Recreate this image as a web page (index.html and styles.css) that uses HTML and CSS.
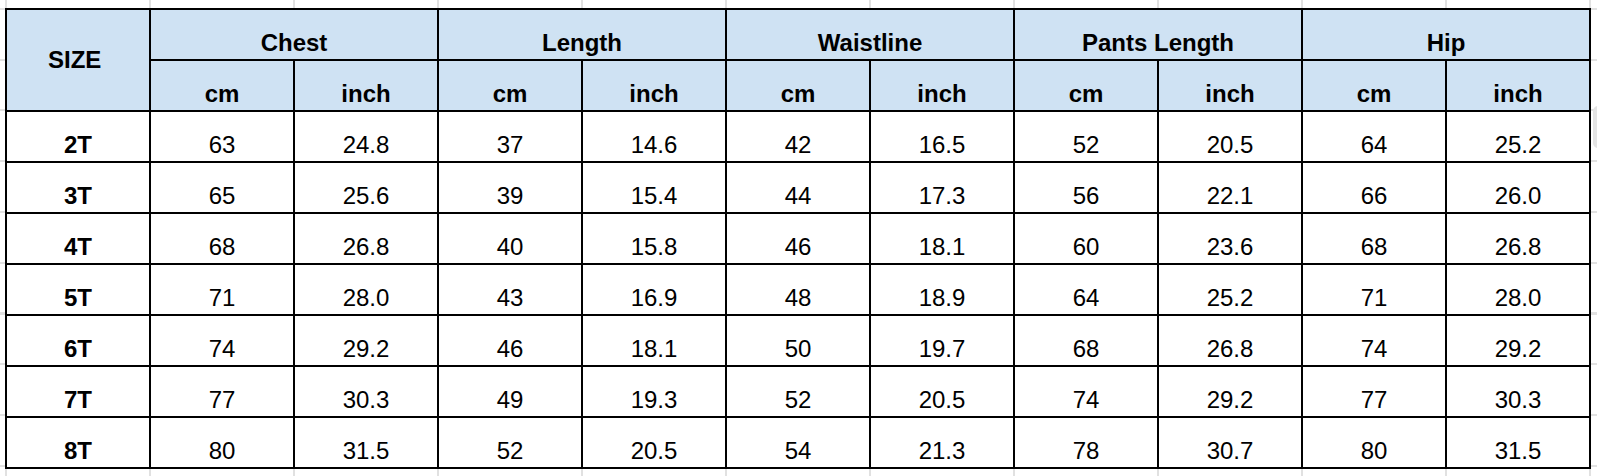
FILE: index.html
```html
<!DOCTYPE html>
<html lang="en">
<head>
<meta charset="utf-8">
<title>Size chart</title>
<link rel="stylesheet" href="styles.css">
</head>
<body>
<div class="sheet">
  <table class="size-table">
    <colgroup>
      <col><col><col><col><col><col><col><col><col><col><col>
    </colgroup>
    <thead>
      <tr class="row-h1">
        <th class="size-head" rowspan="2">SIZE&nbsp;</th>
        <th colspan="2">Chest</th>
        <th colspan="2">Length</th>
        <th colspan="2">Waistline</th>
        <th colspan="2">Pants Length</th>
        <th colspan="2">Hip</th>
      </tr>
      <tr class="row-h2">
        <th>cm</th><th>inch</th>
        <th>cm</th><th>inch</th>
        <th>cm</th><th>inch</th>
        <th>cm</th><th>inch</th>
        <th>cm</th><th>inch</th>
      </tr>
    </thead>
    <tbody>
      <tr><th>2T</th><td>63</td><td>24.8</td><td>37</td><td>14.6</td><td>42</td><td>16.5</td><td>52</td><td>20.5</td><td>64</td><td>25.2</td></tr>
      <tr><th>3T</th><td>65</td><td>25.6</td><td>39</td><td>15.4</td><td>44</td><td>17.3</td><td>56</td><td>22.1</td><td>66</td><td>26.0</td></tr>
      <tr><th>4T</th><td>68</td><td>26.8</td><td>40</td><td>15.8</td><td>46</td><td>18.1</td><td>60</td><td>23.6</td><td>68</td><td>26.8</td></tr>
      <tr><th>5T</th><td>71</td><td>28.0</td><td>43</td><td>16.9</td><td>48</td><td>18.9</td><td>64</td><td>25.2</td><td>71</td><td>28.0</td></tr>
      <tr><th>6T</th><td>74</td><td>29.2</td><td>46</td><td>18.1</td><td>50</td><td>19.7</td><td>68</td><td>26.8</td><td>74</td><td>29.2</td></tr>
      <tr><th>7T</th><td>77</td><td>30.3</td><td>49</td><td>19.3</td><td>52</td><td>20.5</td><td>74</td><td>29.2</td><td>77</td><td>30.3</td></tr>
      <tr><th>8T</th><td>80</td><td>31.5</td><td>52</td><td>20.5</td><td>54</td><td>21.3</td><td>78</td><td>30.7</td><td>80</td><td>31.5</td></tr>
    </tbody>
  </table>
  <div class="edge-handle"></div>
</div>
</body>
</html>
```

FILE: styles.css
```css
html, body {
  margin: 0;
  padding: 0;
}

body {
  background-color: #ffffff;
  background-image:
    repeating-linear-gradient(to right, #e1e1e1 0 2px, transparent 2px 144px),
    repeating-linear-gradient(to bottom, #e1e1e1 0 2px, transparent 2px 50.75px);
  background-position: 5px 0, 0 8px;
  width: 1597px;
  height: 476px;
  overflow: hidden;
  font-family: "Liberation Sans", Arial, sans-serif;
  color: #000;
}

.sheet {
  position: relative;
  padding: 8px 0 0 5px;
}

.size-table {
  border-collapse: collapse;
  table-layout: fixed;
  width: 1586px;
  background: #fff;
  font-size: 24px;
  line-height: 26px;
}

.size-table col {
  width: 144px;
}

.size-table th,
.size-table td {
  border: 2px solid #000;
  padding: 0 0 3px 0;
  text-align: center;
  vertical-align: bottom;
  white-space: nowrap;
}

.size-table th {
  font-weight: bold;
}

.size-table td {
  font-weight: normal;
}

.size-table thead th {
  background: #cfe2f3;
}

.size-table thead th.size-head {
  vertical-align: middle;
  padding: 0;
}

.size-table tr {
  height: 51px;
}

.edge-handle {
  position: absolute;
  left: 1593px;
  top: 106px;
  width: 10px;
  height: 42px;
  border-radius: 5px;
  background: #e4e4e4;
}
```
